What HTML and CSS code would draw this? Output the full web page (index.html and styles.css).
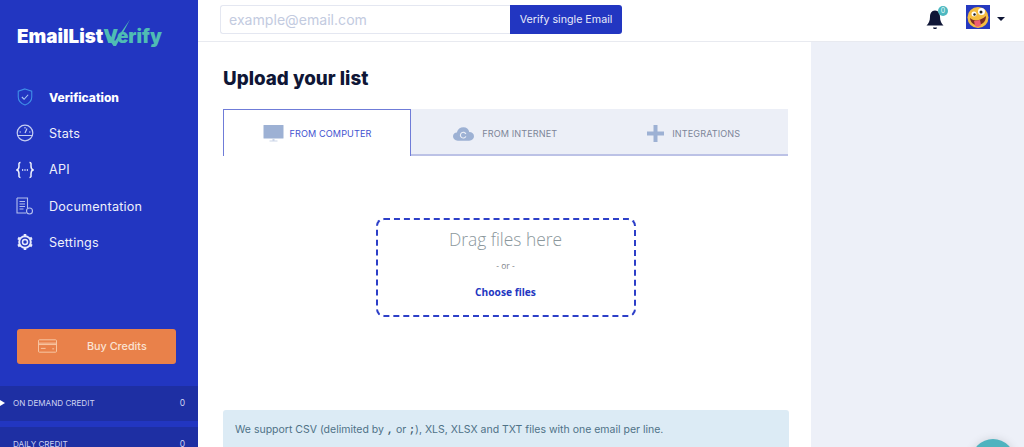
FILE: index.html
```html
<!DOCTYPE html>
<html lang="en">
<head>
<meta charset="utf-8">
<title>EmailListVerify</title>
<link rel="stylesheet" href="styles.css">
</head>
<body>
<aside class="sidebar">
  <div class="logo">
    <span class="logo-white">EmailList</span><span class="logo-teal">Verify</span>
    <svg class="logo-check" viewBox="0 0 26 28"><path d="M0 14.500 L3 14 L10 22 L25 0.500 L11 27 L8.500 27 Z" fill="#4fbcb4"/></svg>
  </div>
  <nav class="nav">
    <a class="nav-item active">
      <svg class="nav-icon" viewBox="0 0 18 20" fill="none" stroke="#3f8fe8" stroke-width="1.200"><path d="M9 1 L16.500 3.500 V10 C16.500 14.500 13 17.500 9 19 C5 17.500 1.500 14.500 1.500 10 V3.500 Z"/><path d="M5.500 10 L8 12.500 L12.500 7.500" stroke="#a9c9f5"/></svg>
      <span>Verification</span>
    </a>
    <a class="nav-item">
      <svg class="nav-icon" viewBox="0 0 18 18" fill="none" stroke="#c5cdf2" stroke-width="1.200"><circle cx="9" cy="9" r="7.800"/><path d="M1.500 11.500 H16.500 M9 9 L11 4.500 M3.500 8 H5 M13 8 H14.500 M9 3 V4.500"/></svg>
      <span>Stats</span>
    </a>
    <a class="nav-item">
      <svg class="nav-icon" viewBox="0 0 18 18" fill="none" stroke="#eef1fd" stroke-width="1.500"><path d="M4.500 1.500 C2.500 1.500 3 3 3 5 C3 7.500 2.500 8.500 1 9 C2.500 9.500 3 10.500 3 13 C3 15 2.500 16.500 4.500 16.500 M13.500 1.500 C15.500 1.500 15 3 15 5 C15 7.500 15.500 8.500 17 9 C15.500 9.500 15 10.500 15 13 C15 15 15.500 16.500 13.500 16.500"/><path d="M6 9 H7.200 M8.400 9 H9.600 M10.800 9 H12" stroke-width="1.600"/></svg>
      <span>API</span>
    </a>
    <a class="nav-item">
      <svg class="nav-icon" viewBox="0 0 18 18" fill="none" stroke="#b4bfee" stroke-width="1.100"><path d="M1 1 H11.500 V11 M1 1 V16 H10"/><path d="M3.500 4.500 H9 M3.500 7 H9 M3.500 9.500 H9 M3.500 12 H7.500"/><circle cx="13.500" cy="14" r="3"/></svg>
      <span>Documentation</span>
    </a>
    <a class="nav-item">
      <svg class="nav-icon" viewBox="0 0 18 18" fill="none" stroke="#e6eafc"><circle cx="9" cy="9" r="2.500" stroke-width="1.500"/><circle cx="9" cy="9" r="5.800" stroke-width="2"/><path d="M9 1 V3 M9 15 V17 M2 5 L3.800 6 M14.200 12 L16 13 M2 13 L3.800 12 M14.200 6 L16 5" stroke-width="2.600"/></svg>
      <span>Settings</span>
    </a>
  </nav>
  <button class="buy">
    <svg class="buy-icon" viewBox="0 0 20 14" fill="none" stroke="#f8c9a8" stroke-width="1"><rect x="0.500" y="0.500" width="19" height="13" rx="1"/><path d="M0.500 4 H19.500 M0.500 5.500 H19.500 M3 9.500 H8 M15 10 H17"/></svg>
    <span>Buy Credits</span>
  </button>
  <div class="credits">
    <div class="credit-row"><i class="arrow"></i><span class="credit-name">ON DEMAND CREDIT</span><span class="credit-val">0</span></div>
    <div class="credit-row"><span class="credit-name">DAILY CREDIT</span><span class="credit-val">0</span></div>
  </div>
</aside>
<div class="page">
  <header class="topbar">
    <form class="verify-form">
      <input class="verify-input" type="text" placeholder="example@email.com">
      <button class="verify-btn" type="button">Verify single Email</button>
    </form>
    <div class="top-right">
      <div class="bell">
        <svg viewBox="0 0 20 22" width="20" height="22"><path d="M10 1.500 C13.500 1.500 15 4.500 15 8 C15 12 16.500 14.500 18.500 16.500 H1.500 C3.500 14.500 5 12 5 8 C5 4.500 6.500 1.500 10 1.500 Z M8 18.500 H12 C12 20.500 8 20.500 8 18.500 Z" fill="#0f1636"/></svg>
        <span class="badge">0</span>
      </div>
      <div class="avatar">
        <svg viewBox="0 0 24 24" width="24" height="24"><rect width="24" height="24" fill="#2539c0"/><circle cx="12" cy="12.500" r="10.500" fill="#f5bd41"/><circle cx="8" cy="9" r="2.500" fill="#fff"/><circle cx="15.500" cy="6.500" r="3.500" fill="#fff"/><circle cx="8.500" cy="9.500" r="1.200" fill="#222"/><circle cx="15" cy="7" r="1.500" fill="#222"/><path d="M4 13 C8 17 14 16 20 11 C20 17 16 20 11 20 C7 20 4.500 17 4 13 Z" fill="#7b2d26"/><path d="M8 16 L14 15 L15 20 C14 22 10 22.500 9 20.500 Z" fill="#ef5f72"/></svg>
      </div>
      <i class="caret"></i>
    </div>
  </header>
  <div class="content">
    <main class="main">
      <h1 class="title">Upload your list</h1>
      <div class="tabs">
        <div class="tab active">
          <svg class="tab-icon" viewBox="0 0 20 17"><rect y="0" width="20" height="13.500" rx="0.500" fill="#9db1d4"/><path d="M9 13.500 H11 V15.500 H14 V16.500 H6 V15.500 H9 Z" fill="#cbd5e8"/></svg>
          <span>FROM COMPUTER</span>
        </div>
        <div class="tab">
          <svg class="tab-icon" viewBox="0 0 22 15"><path d="M5 15 C2 15 0 13 0 10.500 C0 8 2 6.500 4 6.500 C5 3 7.500 1 11 1 C14 1 16.500 3 17 6 C20 6 22 8 22 10.500 C22 13 20 15 17 15 Z" fill="#9db1d4"/><path d="M13.500 8 A3 3 0 1 0 13.500 10.500" stroke="#eceff7" stroke-width="1.200" fill="none"/></svg>
          <span>FROM INTERNET</span>
        </div>
        <div class="tab">
          <svg class="tab-plus" viewBox="0 0 17 17"><path d="M6.500 0 H10.500 V6.500 H17 V10.500 H10.500 V17 H6.500 V10.500 H0 V6.500 H6.500 Z" fill="#9db1d4"/></svg>
          <span>INTEGRATIONS</span>
        </div>
      </div>
      <div class="drop-wrap">
        <div class="drop">
          <div class="drop-title">Drag files here</div>
          <div class="drop-or">- or -</div>
          <div class="drop-choose">Choose files</div>
        </div>
      </div>
      <div class="info">We support CSV (delimited by <code>,</code> or <code>;</code>), XLS, XLSX and TXT files with one email per line.</div>
    </main>
    <div class="side-panel"></div>
  </div>
</div>
<div class="fab"></div>
</body>
</html>
```
FILE: styles.css
```css
* { box-sizing: border-box; }
html, body { height: 100%; margin: 0; }
body {
  display: flex;
  height: 447px;
  overflow: hidden;
  background: #fff;
  font-family: "Inter", "Liberation Sans", sans-serif;
  color: #0f1636;
}
.sidebar {
  width: 198px;
  flex: none;
  height: 447px;
  background: #2236c1;
  display: flex;
  flex-direction: column;
  overflow: hidden;
  color: #fff;
}
.logo {
  position: relative;
  margin: 26px 0 0 17px;
  height: 22px;
  font-size: 18.800px;
  line-height: 22px;
  font-weight: 900;
  white-space: nowrap;
}
.logo-white { color: #fff; }
.logo-teal { color: #4fbcb4; }
.logo-check { position: absolute; left: 88px; top: -7px; width: 26px; height: 28px; }
.nav { margin-top: 31px; display: flex; flex-direction: column; }
.nav-item {
  height: 36.300px;
  display: flex;
  align-items: center;
  padding-left: 16px;
  gap: 15px;
  font-size: 12.600px;
  letter-spacing: 0.200px;
  color: #eef0fb;
}
.nav-item.active { font-weight: 800; color: #fff; font-size: 12px; letter-spacing: 0; }
.nav-icon { width: 18px; height: 18px; flex: none; }
.buy {
  margin: 68.500px 0 0 17px;
  width: 159px;
  height: 35px;
  flex: none;
  background: #e9814a;
  border: 0;
  border-radius: 3px;
  display: flex;
  align-items: center;
  padding: 0 0 0 21px;
  font: 500 10.800px "Inter", sans-serif;
  color: #fbe3d3;
}
.buy-icon { width: 19px; height: 14px; margin-right: 30px; }
.credits { margin-top: 22px; display: flex; flex-direction: column; gap: 6px; }
.credit-row {
  height: 35px;
  flex: none;
  background: #1e2fa3;
  display: flex;
  align-items: center;
  padding: 0 13px;
  font-size: 8.100px;
  color: #ccd3f2;
  position: relative;
}
.credit-name { flex: 1; }
.credit-val { font-size: 8.500px; }
.arrow {
  position: absolute;
  left: 0;
  top: 14px;
  border-left: 5px solid #fff;
  border-top: 3.500px solid transparent;
  border-bottom: 3.500px solid transparent;
}
.page { flex: 1; min-width: 0; display: flex; flex-direction: column; }
.topbar {
  height: 42px;
  flex: none;
  border-bottom: 1px solid #e8eaf0;
  display: flex;
  align-items: flex-start;
  justify-content: space-between;
  padding: 5px 19px 0 22px;
}
.verify-form { display: flex; height: 29px; }
.verify-input {
  width: 290px;
  height: 29px;
  border: 1px solid #e4e7f1;
  border-right: 0;
  border-radius: 3px 0 0 3px;
  padding: 0 8px;
  font: 400 14.100px "Inter", sans-serif;
  outline: none;
}
.verify-input::placeholder { color: #c3cbdf; opacity: 1; }
.verify-btn {
  width: 112px;
  height: 29px;
  background: #2236c1;
  color: #e8ebfa;
  border: 0;
  border-radius: 0 3px 3px 0;
  font: 400 10.700px "Inter", sans-serif;
  padding: 0;
}
.top-right { display: flex; align-items: flex-start; }
.bell { position: relative; width: 20px; height: 24px; margin: 4px 21px 0 0; }
.bell svg { display: block; }
.badge {
  position: absolute;
  left: 13px;
  top: -3px;
  width: 10px;
  height: 10px;
  border-radius: 50%;
  background: #4db8c0;
  color: #e9fbfb;
  font-size: 7px;
  line-height: 10px;
  text-align: center;
}
.avatar { width: 24px; height: 24px; }
.avatar svg { display: block; }
.caret {
  margin: 12px 0 0 7px;
  border-top: 4px solid #0f1636;
  border-left: 4.500px solid transparent;
  border-right: 4.500px solid transparent;
}
.content { flex: 1; min-height: 0; display: flex; }
.main { width: 613px; flex: none; padding: 0 22px 0 25px; }
.title {
  margin: 25px 0 0;
  font-size: 18.800px;
  line-height: 24px;
  font-weight: 800;
  color: #0f1636;
}
.tabs { display: flex; margin-top: 18px; width: 565px; height: 47px; }
.tab {
  flex: 1 1 0;
  display: flex;
  align-items: center;
  justify-content: center;
  gap: 8px;
  background: #eceff7;
  border-bottom: 2px solid #bcc2e6;
  padding-top: 4px;
  font-size: 9.100px;
  letter-spacing: 0.100px;
  color: #7d8597;
}
.tab.active {
  flex: 0 0 188px;
  background: #fff;
  border: 1px solid #6f7cd8;
  border-bottom: 0;
  padding-top: 0;
  gap: 6px;
  color: #3f52d0;
}
.tab-icon { width: 21px; height: 17px; }
.tab-plus { width: 17px; height: 17px; }
.drop-wrap { display: flex; justify-content: center; padding: 62px 0 0; width: 565px; }
.drop {
  width: 260px;
  height: 99px;
  border: 2px dashed #2d3fc8;
  border-radius: 8px;
  text-align: center;
  font-family: "Open Sans", sans-serif;
  padding-top: 7px;
}
.drop-title { font-size: 17.400px; font-weight: 300; line-height: 24px; color: #8b979c; }
.drop-or { font-size: 8.500px; line-height: 12px; margin-top: 9px; color: #7f838a; }
.drop-choose { font-size: 10.200px; font-weight: 700; line-height: 14px; margin-top: 13px; color: #2236c1; }
.info {
  margin-top: 93px;
  width: 566px;
  height: 50px;
  padding: 12px;
  background: #dcebf5;
  border-radius: 3px 3px 0 0;
  font-size: 10.500px;
  line-height: 15px;
  color: #4f7287;
  white-space: nowrap;
}
.info code { font-family: "Liberation Mono", monospace; font-size: 10px; font-weight: 700; color: #3a5568; }
.side-panel { flex: 1; background: #edf0f8; }
.fab {
  position: fixed;
  left: 971px;
  top: 439px;
  width: 44px;
  height: 44px;
  border-radius: 50%;
  background: #4fb3bf;
  box-shadow: 0 0 10px rgba(0,0,0,.12);
}
```
